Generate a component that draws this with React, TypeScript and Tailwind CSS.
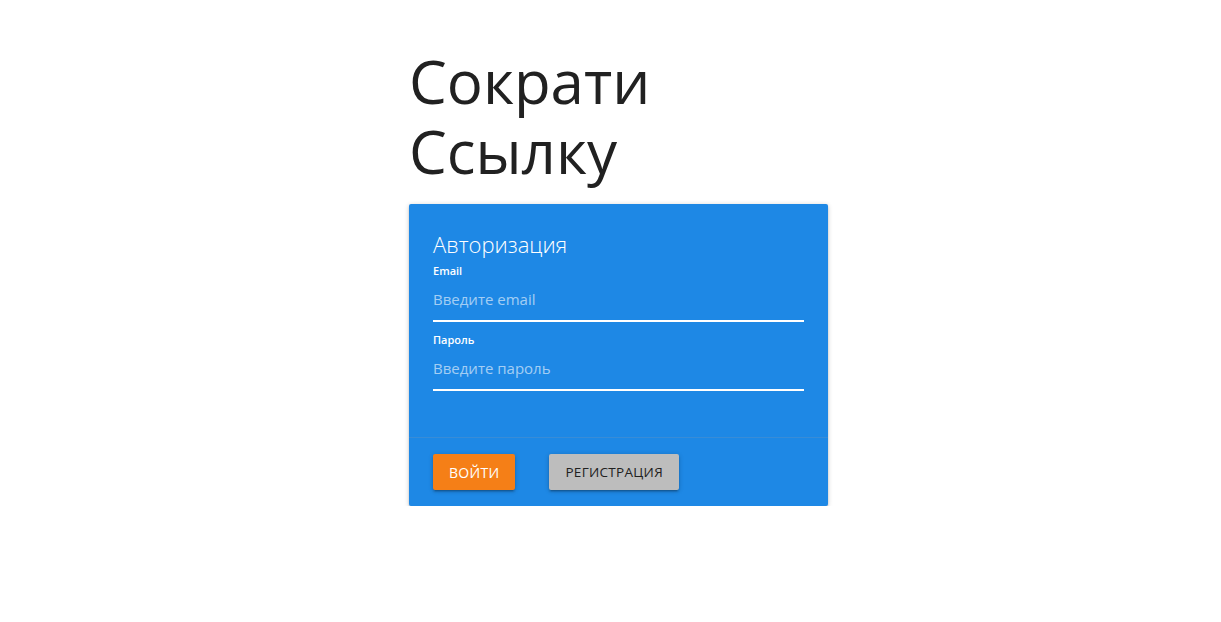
import React from 'react';

const raised =
  'shadow-[0_2px_2px_0_rgba(0,0,0,0.14),0_3px_1px_-2px_rgba(0,0,0,0.12),0_1px_5px_0_rgba(0,0,0,0.2)]';

export default function App() {
  return (
    <div className="bg-white pt-[46px] font-['Open_Sans','Noto_Sans',sans-serif]">
      <div className="mx-auto w-[435px] pl-4">
        <h1 className="mb-[18px] text-[60px] leading-[70px] font-normal text-[#212121]">
          Сократи Ссылку
        </h1>

        {/* Auth card */}
        <div className={`rounded-[2px] bg-[#1e88e5] ${raised}`}>
          <div className="px-6 pt-6 pb-[46px]">
            <div className="text-[22px] leading-[32px] font-light text-white">Авторизация</div>

            <div className="mt-1">
              <label className="block text-[11px] leading-[14px] font-semibold text-white">Email</label>
              <input
                type="text"
                placeholder="Введите email"
                className="block h-[44px] w-full border-b-2 border-white bg-transparent text-[15px] text-white outline-none placeholder:text-white/60"
              />
            </div>

            <div className="mt-[11px]">
              <label className="block text-[11px] leading-[14px] font-semibold text-white">Пароль</label>
              <input
                type="password"
                placeholder="Введите пароль"
                className="block h-[44px] w-full border-b-2 border-white bg-transparent text-[15px] text-white outline-none placeholder:text-white/60"
              />
            </div>
          </div>

          <div className="flex gap-[34px] border-t border-[rgba(160,160,160,0.2)] px-6 py-4">
            <button
              type="button"
              className={`h-9 rounded-[2px] bg-[#f57f17] px-4 text-[14px] tracking-[0.3px] text-white uppercase ${raised}`}
            >
              Войти
            </button>
            <button
              type="button"
              className={`h-9 rounded-[2px] bg-[#bdbdbd] px-4 text-[13.5px] tracking-[0.3px] text-[#212121] uppercase ${raised}`}
            >
              Регистрация
            </button>
          </div>
        </div>
      </div>
    </div>
  );
}
